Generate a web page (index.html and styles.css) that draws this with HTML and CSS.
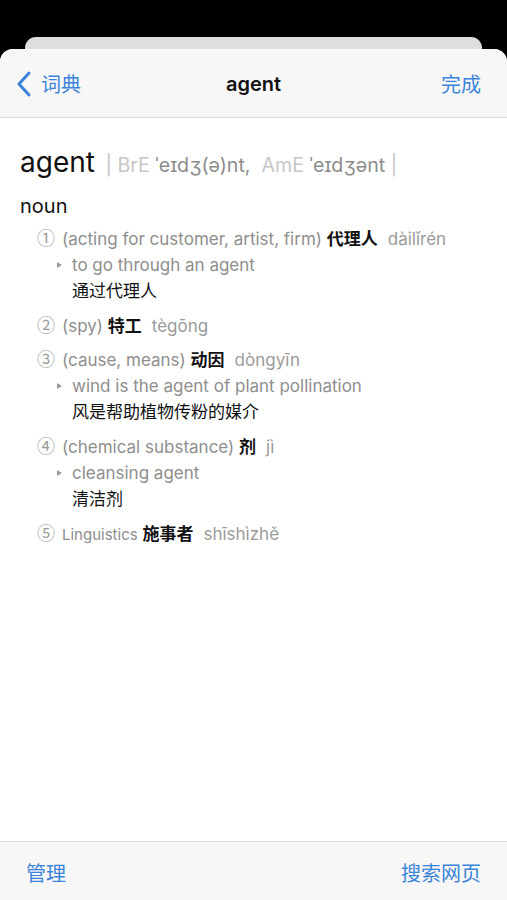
FILE: index.html
```html
<!DOCTYPE html>
<html lang="zh">
<head>
<meta charset="utf-8">
<title>agent</title>
<link rel="stylesheet" href="styles.css">
</head>
<body>
<div class="back-card"></div>
<div class="sheet">
  <header class="navbar">
    <div class="nav-left">
      <svg class="chevron" width="14" height="26" viewBox="0 0 14 26"><path d="M12 2 L2 13 L12 24" fill="none" stroke="currentColor" stroke-width="3" stroke-linecap="round" stroke-linejoin="round"/></svg>
      <span>词典</span>
    </div>
    <div class="nav-title">agent</div>
    <div class="nav-right">完成</div>
  </header>
  <main class="content">
    <div class="headline">
      <span class="headword">agent</span>
      <span class="pron"><span class="light">| BrE</span> <span class="ipa">ˈeɪdʒ(ə)nt,</span>&nbsp; <span class="light">AmE</span> <span class="ipa">ˈeɪdʒənt</span> <span class="light">|</span></span>
    </div>
    <div class="pos">noun</div>
    <ol class="senses">
      <li class="sense">
        <div class="line"><span class="num">①</span><span class="gloss">(acting for customer, artist, firm)</span> <b class="zh">代理人</b><span class="py">dàilǐrén</span></div>
        <div class="ex"><span class="tri"></span>to go through an agent</div>
        <div class="tr">通过代理人</div>
      </li>
      <li class="sense">
        <div class="line"><span class="num">②</span><span class="gloss">(spy)</span> <b class="zh">特工</b><span class="py">tègōng</span></div>
      </li>
      <li class="sense">
        <div class="line"><span class="num">③</span><span class="gloss">(cause, means)</span> <b class="zh">动因</b><span class="py">dòngyīn</span></div>
        <div class="ex"><span class="tri"></span>wind is the agent of plant pollination</div>
        <div class="tr">风是帮助植物传粉的媒介</div>
      </li>
      <li class="sense">
        <div class="line"><span class="num">④</span><span class="gloss">(chemical substance)</span> <b class="zh">剂</b><span class="py">jì</span></div>
        <div class="ex"><span class="tri"></span>cleansing agent</div>
        <div class="tr">清洁剂</div>
      </li>
      <li class="sense">
        <div class="line"><span class="num">⑤</span><span class="label">Linguistics</span> <b class="zh">施事者</b><span class="py">shīshìzhě</span></div>
      </li>
    </ol>
  </main>
  <footer class="toolbar">
    <span>管理</span>
    <span>搜索网页</span>
  </footer>
</div>
</body>
</html>
```
FILE: styles.css
```css
html, body {
  margin: 0;
  padding: 0;
  background: #000;
  height: 900px;
  overflow: hidden;
}
body {
  font-family: Inter, "Noto Sans CJK SC", "Liberation Sans", sans-serif;
  display: flex;
  flex-direction: column;
}
.back-card {
  margin: 37px 25px 0;
  height: 12px;
  background: #dedede;
  border-radius: 11px 11px 0 0;
  flex: none;
}
.sheet {
  flex: 1;
  background: #fff;
  border-radius: 13px 13px 0 0;
  display: flex;
  flex-direction: column;
  overflow: hidden;
}
.navbar {
  height: 68px;
  background: #f7f7f7;
  border-bottom: 1px solid #dddddd;
  display: flex;
  align-items: center;
  justify-content: space-between;
  padding: 0 26px 0 17px;
  position: relative;
  flex: none;
}
.nav-left {
  display: flex;
  align-items: center;
  gap: 10px;
  color: #3a84d9;
  font-size: 20px;
}
.chevron {
  display: block;
  margin-top: 1px;
}
.nav-title {
  position: absolute;
  left: 0;
  right: 0;
  text-align: center;
  font-size: 20px;
  font-weight: 600;
  color: #111;
  pointer-events: none;
  margin-top: 1px;
}
.nav-right {
  color: #3a84d9;
  font-size: 20px;
}
.content {
  flex: 1;
  padding: 26px 20px 0;
}
.headline {
  height: 36px;
  line-height: 36px;
  white-space: nowrap;
  overflow: visible;
}
.headword {
  font-size: 28px;
  color: #111;
  margin-right: 6px;
}
.pron {
  font-size: 19.6px;
}
.light {
  color: #c6c6c6;
}
.ipa {
  color: #8c8c8c;
}
.pos {
  margin-top: 12px;
  height: 28px;
  font-size: 20px;
  line-height: 28px;
  color: #111;
}
.senses {
  list-style: none;
  margin: 4px 0 0;
  padding: 0 0 0 17px;
  display: flex;
  flex-direction: column;
  gap: 8px;
}
.sense {
  font-size: 17px;
  line-height: 26px;
  color: #8e8e8e;
}
.line {
  height: 26px;
  white-space: nowrap;
}
.num {
  display: inline-block;
  width: 25px;
  font-family: "Noto Sans CJK SC", sans-serif;
  font-weight: 400;
  font-size: 18px;
  color: #9c9c9c;
}
.zh {
  font-weight: 700;
  color: #111;
  font-family: "Noto Sans CJK SC", sans-serif;
}
.py {
  margin-left: 10px;
  color: #9a9a9a;
}
.label {
  font-size: 15px;
}
.ex {
  position: relative;
  height: 25px;
  padding: 2px 0 0 35px;
  line-height: 27px;
}
.tri {
  position: absolute;
  left: 20px;
  top: 12px;
  width: 0;
  height: 0;
  border-top: 3px solid transparent;
  border-bottom: 3px solid transparent;
  border-left: 5px solid #9a9a9a;
}
.tr {
  height: 26px;
  padding-left: 35px;
  color: #111;
  font-family: "Noto Sans CJK SC", sans-serif;
}
.toolbar {
  height: 59px;
  background: #f7f7f7;
  border-top: 1px solid #dddddd;
  display: flex;
  justify-content: space-between;
  align-items: flex-start;
  padding: 18px 26px 0;
  box-sizing: border-box;
  color: #3a84d9;
  font-size: 20px;
  line-height: 28px;
  flex: none;
}
```
